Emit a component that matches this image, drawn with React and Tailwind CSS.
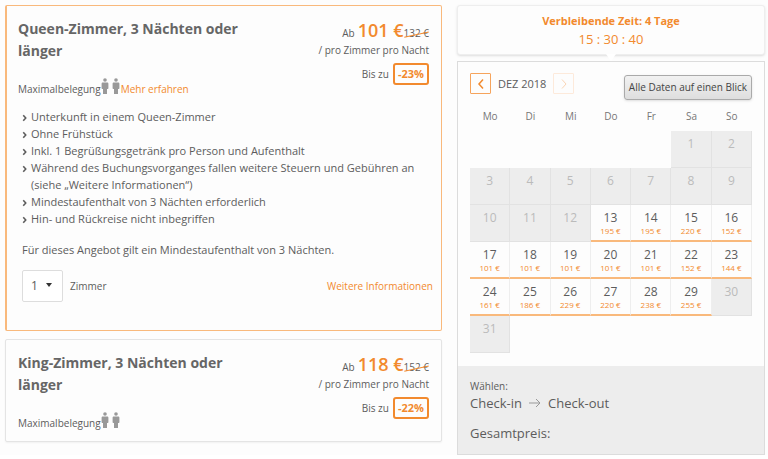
import { useState } from 'react'

const WEEKDAYS = ['Mo', 'Di', 'Mi', 'Do', 'Fr', 'Sa', 'So']

const PRICES = {
  13: 195, 14: 195, 15: 220, 16: 152,
  17: 101, 18: 101, 19: 101, 20: 101, 21: 101, 22: 152, 23: 144,
  24: 161, 25: 186, 26: 229, 27: 220, 28: 238, 29: 255,
}

// December 2018 starts on a Saturday
const WEEKS = Array.from({ length: 6 }, (_, week) =>
  WEEKDAYS.map((_, i) => {
    const day = week * 7 + i - 4
    return day >= 1 && day <= 31 ? day : null
  })
)

const FEATURES = [
  'Unterkunft in einem Queen-Zimmer',
  'Ohne Frühstück',
  'Inkl. 1 Begrüßungsgetränk pro Person und Aufenthalt',
  'Während des Buchungsvorganges fallen weitere Steuern und Gebühren an (siehe „Weitere Informationen“)',
  'Mindestaufenthalt von 3 Nächten erforderlich',
  'Hin- und Rückreise nicht inbegriffen',
]

function Person() {
  return (
    <svg viewBox="0 0 8 16" className="w-2 h-4 fill-[#999]" aria-hidden="true">
      <circle cx="4" cy="2" r="1.8" />
      <path d="M1.8 4.4h4.4c.7 0 1.2.5 1.2 1.2v4.6c0 .4-.3.7-.7.7H6V16H2v-5.1h-.7c-.4 0-.7-.3-.7-.7V5.6c0-.7.5-1.2 1.2-1.2z" />
    </svg>
  )
}

function Chevron({ left, className }) {
  return (
    <svg viewBox="0 0 8 12" fill="none" stroke="currentColor" className={className} aria-hidden="true">
      <path d={left ? 'M6 1.5L2 6l4 4.5' : 'M2 1.5L6 6l-4 4.5'} />
    </svg>
  )
}

function OfferHeader({ title, price, oldPrice, discount, more }) {
  return (
    <div className="flex justify-between">
      <div>
        <h2 className="text-[14px] leading-[22px] font-bold text-[#666]">{title}</h2>
        <div className="flex items-end mt-[15px] h-5 text-[10px] leading-[15px]">
          <span>Maximalbelegung</span>
          <span className="flex gap-[3px] pb-[3px]">
            <Person />
            <Person />
          </span>
          {more && <a href="#mehr" className="text-[#f28a2e] pl-px">Mehr erfahren</a>}
        </div>
      </div>
      <div className="w-[170px] shrink-0 text-right text-[10px] leading-[15px] whitespace-nowrap">
        <p className="flex items-baseline justify-end h-[25px] leading-[25px]">
          Ab
          <strong className="pl-[3px] text-[18px] font-semibold text-[#f28a2e]">{price} €</strong>
          <s className="relative no-underline">
            {oldPrice} €
            <span className="absolute left-0 top-1/2 w-full h-px bg-[#f28a2e] -rotate-12" />
          </s>
        </p>
        <p>/ pro Zimmer pro Nacht</p>
        <p className="flex items-center justify-end gap-1 mt-[5px]">
          Bis zu
          <span className="border-2 border-[#f28a2e] rounded-[3px] px-[3px] text-[11px] leading-[18px] font-bold text-[#f28a2e]">
            -{discount}%
          </span>
        </p>
      </div>
    </div>
  )
}

function QueenOffer() {
  const [rooms, setRooms] = useState('1')

  return (
    <section className="border border-[#f9b97c] border-l-2 rounded-[2px] pt-3 pl-[11px] pr-[12px] pb-7">
      <OfferHeader title="Queen-Zimmer, 3 Nächten oder länger" price={101} oldPrice={132} discount={23} more />
      <ul className="mt-[11px] pl-1 text-[11px] leading-[17px]">
        {FEATURES.map((text) => (
          <li key={text} className="flex gap-1">
            <Chevron className="w-[5px] h-2 mt-[6px] shrink-0 stroke-[2.5]" />
            <span>{text}</span>
          </li>
        ))}
      </ul>
      <p className="mt-[14px] pl-1 text-[11px] leading-[17px]">
        Für dieses Angebot gilt ein Mindestaufenthalt von 3 Nächten.
      </p>
      <div className="flex items-center mt-3 pl-1 text-[10px]">
        <div className="relative">
          <select
            id="rooms"
            value={rooms}
            onChange={(e) => setRooms(e.target.value)}
            className="block appearance-none w-[41px] h-8 pl-2 border border-[#ddd] rounded-[2px] text-[12px] bg-white"
          >
            <option>1</option>
            <option>2</option>
            <option>3</option>
          </select>
          <svg viewBox="0 0 6 4" className="absolute right-[11px] top-[13px] w-[6px] h-1 fill-[#333] pointer-events-none">
            <path d="M0 0h6L3 4z" />
          </svg>
        </div>
        <label htmlFor="rooms" className="pl-[7px]">Zimmer</label>
        <a href="#info" className="ml-auto -mr-1 text-[#f28a2e]">Weitere Informationen</a>
      </div>
    </section>
  )
}

function Day({ day }) {
  if (!day) return <td className="h-[37px] p-0" />

  const price = PRICES[day]
  if (!price) {
    return (
      <td className="h-[37px] p-0 pt-1 align-top border-r border-b border-[#e2e2e2] bg-[#ededed] text-[#bbb]">{day}</td>
    )
  }
  return (
    <td className="h-[37px] p-0 align-top border-r border-r-[#eee] border-b-2 border-b-[#f9b97c]">
      <button type="button" className="block w-full pt-1">
        <span className="block">{day}</span>
        <span className="block text-[8px] leading-[10px] font-medium text-[#f28a2e]">{price} €</span>
      </button>
    </td>
  )
}

function Calendar() {
  return (
    <section className="border border-[#dcdcdc]">
      <div className="px-3 pt-[11px]">
        <div className="flex items-start text-[11px] leading-[21px]">
          <button type="button" aria-label="Vorheriger Monat" className="flex items-center justify-center size-[21px] border border-[#f6a45c] rounded-[1px] text-[#f28a2e]">
            <Chevron left className="w-2 h-3 stroke-[1.5]" />
          </button>
          <span className="px-[7px]">DEZ 2018</span>
          <button type="button" disabled aria-label="Nächster Monat" className="flex items-center justify-center size-[21px] border border-[#fdeadb] rounded-[1px] text-[#fbd5b5]">
            <Chevron className="w-2 h-3" />
          </button>
          <button type="button" className="ml-auto mt-[2px] h-[25px] px-1 border border-[#aaa] rounded-[3px] bg-linear-to-b from-[#f2f2f2] to-[#dedede] text-[10px] text-[#444] shadow-sm">
            Alle Daten auf einen Blick
          </button>
        </div>
        <table className="w-full mt-2 table-fixed border-separate border-spacing-0 text-center text-[12px] leading-[17px]">
          <thead>
            <tr>
              {WEEKDAYS.map((name) => (
                <th key={name} scope="col" className="h-[23px] p-0 pb-[6px] text-[10px] font-normal text-[#777]">{name}</th>
              ))}
            </tr>
          </thead>
          <tbody>
            {WEEKS.map((week, i) => (
              <tr key={i}>
                {week.map((day, j) => <Day key={j} day={day} />)}
              </tr>
            ))}
          </tbody>
        </table>
      </div>
      <div className="mt-[13px] px-3 pt-[13px] pb-3 bg-[#ededed] text-[13px] leading-[18px]">
        <p className="text-[10px] leading-[15px]">Wählen:</p>
        <p className="flex items-center gap-[7px]">
          Check-in
          <svg viewBox="0 0 12 10" className="w-3 h-[10px]" fill="none" stroke="#999" aria-hidden="true">
            <path d="M0 5h11M7 1l4 4-4 4" />
          </svg>
          Check-out
        </p>
        <p className="mt-3">Gesamtpreis:</p>
      </div>
    </section>
  )
}

export default function App() {
  return (
    <main className="grid grid-cols-[437fr_308fr] items-start gap-[15px] pt-[5px] pl-[5px] pr-[3px] bg-[#fdfdfd] text-[#5c5c5c] font-['Open_Sans','Noto_Sans',sans-serif]">
      <div className="flex flex-col gap-2">
        <QueenOffer />
        <section className="border border-[#e4e4e4] shadow-xs rounded-[2px] pt-3 px-3 pb-[10px]">
          <OfferHeader title="King-Zimmer, 3 Nächten oder länger" price={118} oldPrice={152} discount={22} />
        </section>
      </div>
      <aside className="flex flex-col gap-[6px]">
        <div className="relative border border-[#eee] rounded-[3px] shadow py-[6px] text-center text-[#f28a2e] bg-[#fdfdfd]">
          <p className="text-[11px] leading-[18px] font-bold">Verbleibende Zeit: 4 Tage</p>
          <p className="text-[13px] leading-[18px]">15 : 30 : 40</p>
          <svg viewBox="0 0 10 7" className="absolute left-1/2 top-full -ml-[5px] w-[10px] h-[7px] fill-white" aria-hidden="true">
            <path d="M0 0h10L5 7z" />
          </svg>
        </div>
        <Calendar />
      </aside>
    </main>
  )
}
